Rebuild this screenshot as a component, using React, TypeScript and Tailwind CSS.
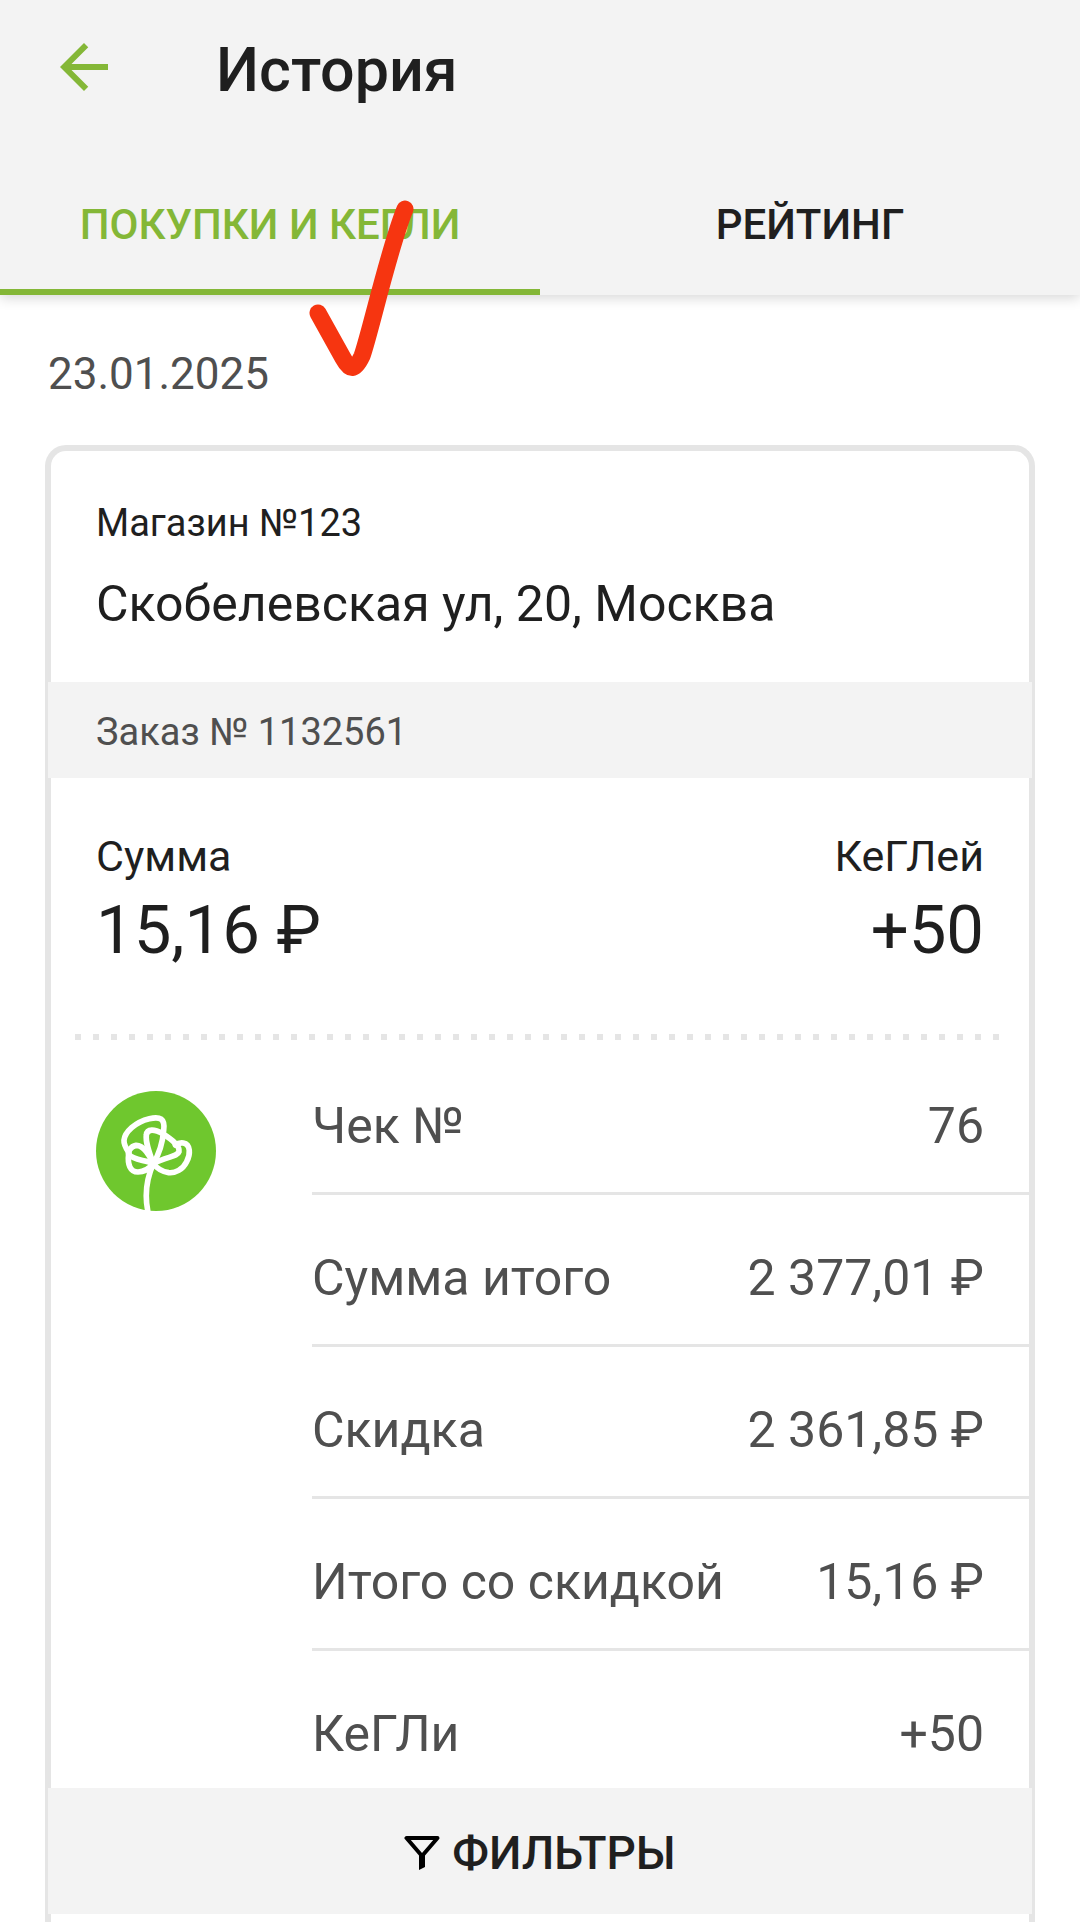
import React from 'react';

const receiptRows = [
  { label: 'Чек №', value: '76' },
  { label: 'Сумма итого', value: '2 377,01 ₽' },
  { label: 'Скидка', value: '2 361,85 ₽' },
  { label: 'Итого со скидкой', value: '15,16 ₽' },
  { label: 'КеГЛи', value: '+50' },
];

const BackIcon = () => (
  <svg viewBox="0 0 24 24" className="h-[72px] w-[72px]" fill="currentColor" aria-hidden="true">
    <path d="M20 11H7.83l5.59-5.59L12 4l-8 8 8 8 1.41-1.41L7.83 13H20v-2z" />
  </svg>
);

const FilterIcon = () => (
  <svg viewBox="0 0 36 36" className="h-9 w-9" fill="none" stroke="#000" aria-hidden="true">
    <path d="M2.5 3H33.5L18 21Z" strokeWidth="4" strokeLinejoin="round" />
    <path d="M15 19H21V32L15 35Z" fill="#000" stroke="none" />
  </svg>
);

const FlowerLogo = () => (
  <svg viewBox="0 0 360 360" className="h-[120px] w-[120px]" aria-hidden="true">
    <circle cx="180" cy="180" r="180" fill="#6fc72e" />
    <g fill="none" stroke="#fff" strokeWidth="17" strokeLinecap="round" strokeLinejoin="round">
      <path d="M172 218C154 258 144 300 155 358" />
      <path d="M172 218C190 188 200 156 203 118C208 82 192 76 160 83C118 93 86 123 84 148C83 162 90 172 98 184" />
      <path d="M172 218C160 186 148 154 151 132C153 112 176 114 200 128C228 146 252 164 249 182C244 198 212 196 172 218" />
      <path d="M172 218C162 194 142 162 120 163C102 166 96 184 98 190C112 208 146 206 172 218" />
      <path d="M98 188C94 220 102 243 126 243C148 243 162 230 172 218" />
      <path d="M238 162C246 156 254 155 262 156C284 160 284 190 272 212C260 236 238 247 218 245C198 242 184 234 172 218" />
    </g>
  </svg>
);

const CheckMark = () => (
  <svg
    viewBox="0 0 108 180"
    className="pointer-events-none absolute left-[308px] top-[196px] h-[180px] w-[108px] overflow-visible"
    fill="none"
    stroke="#f63510"
    strokeWidth="17"
    strokeLinecap="round"
    strokeLinejoin="round"
    aria-hidden="true"
  >
    <path d="M10 117L35 162C42 175 47 175 54 160C62 138 81 52 97 13" />
  </svg>
);

const App = () => {
  return (
    <div className="relative flex min-h-screen flex-col bg-white font-['Roboto',sans-serif] text-[#1f1f1f]">
      <header className="bg-[#f3f3f3] pt-[31px] shadow-[0_3px_12px_rgba(0,0,0,0.16)]">
        <div className="flex items-start gap-24 pl-12">
          <button type="button" aria-label="Назад" className="text-[#84b737]">
            <BackIcon />
          </button>
          <h1 className="text-[61px] font-medium leading-[78px]">История</h1>
        </div>
        <div role="tablist" className="mt-[42px] grid grid-cols-2 text-[42px] font-medium leading-[48px]">
          <button
            type="button"
            role="tab"
            aria-selected="true"
            className="border-b-[6px] border-[#84b737] pb-10 pt-[50px] text-[#84b737]"
          >
            ПОКУПКИ И КЕГЛИ
          </button>
          <button
            type="button"
            role="tab"
            aria-selected="false"
            className="border-b-[6px] border-transparent pb-10 pt-[50px]"
          >
            РЕЙТИНГ
          </button>
        </div>
      </header>

      <main className="flex grow flex-col px-[45px] pt-[55px]">
        <p className="pl-[3px] text-[44px] leading-[48px] text-[#4f4f4f]">23.01.2025</p>

        <section className="mt-[47px] grow rounded-t-[21px] border-[6px] border-b-0 border-[#e5e5e5]">
          <div className="px-[45px] pb-12 pt-12">
            <p className="text-[38px] leading-[48px]">Магазин №123</p>
            <h2 className="mt-[27px] text-[50px] leading-[60px]">Скобелевская ул, 20, Москва</h2>
          </div>

          <div className="-mx-[3px] bg-[#f3f3f3] px-12 pb-[22px] pt-[26px] text-[38px] leading-[48px] text-[#4f4f4f]">
            Заказ № 1132561
          </div>

          <div className="flex justify-between px-[45px] pb-16 pt-[54px]">
            <div>
              <p className="text-[43px] leading-[48px]">Сумма</p>
              <p className="mt-[10px] text-[67px] leading-[80px]">15,16 ₽</p>
            </div>
            <div className="text-right">
              <p className="text-[43px] leading-[48px]">КеГЛей</p>
              <p className="mt-[10px] text-[67px] leading-[80px]">+50</p>
            </div>
          </div>

          <div className="mx-6 h-[6px] bg-[repeating-linear-gradient(to_right,#e5e5e5_0_6px,transparent_6px_18px)]" />

          <div className="mt-[3px] flex">
            <div className="w-[261px] shrink-0 pl-[45px] pt-12">
              <FlowerLogo />
            </div>
            <dl className="grow text-[50px] leading-[60px] text-[#4f4f4f]">
              {receiptRows.map((row) => (
                <div
                  key={row.label}
                  className="flex justify-between border-b-[3px] border-[#e5e5e5] pb-9 pr-[45px] pt-[53px] last:border-b-0 last:pb-6"
                >
                  <dt>{row.label}</dt>
                  <dd>{row.value}</dd>
                </div>
              ))}
            </dl>
          </div>

          <div className="-mx-[3px] mb-2 bg-[#f3f3f3]">
            <button
              type="button"
              className="flex w-full items-center justify-center gap-3 pb-[37px] pt-[41px] text-[46px] font-medium leading-[48px]"
            >
              <FilterIcon />
              ФИЛЬТРЫ
            </button>
          </div>
        </section>
      </main>

      <CheckMark />
    </div>
  );
};

export default App;
